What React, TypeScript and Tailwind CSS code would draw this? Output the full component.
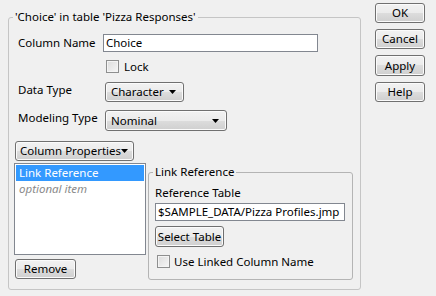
import React from 'react';

const font = { fontFamily: '"Noto Sans", "Open Sans", Arial, sans-serif' };

const btn =
  'flex items-center whitespace-nowrap rounded-[3px] border border-[#707070] bg-[linear-gradient(#f2f2f2_0%,#ebebeb_50%,#dddddd_50%,#cfcfcf_100%)] shadow-[inset_0_0_0_1px_#fbfbfb] leading-none text-black';

const Arrow = () => (
  <svg width="7" height="4" viewBox="0 0 7 4" className="shrink-0">
    <polygon points="0,0 7,0 3.5,4" fill="#000" />
  </svg>
);

const Check = () => (
  <span className="inline-block shrink-0 w-[13px] h-[13px] border border-[#8e8f8f] bg-[linear-gradient(135deg,#dcdcdc,#f6f6f6)] shadow-[inset_0_0_0_1px_#f4f4f4]" />
);

const Dropdown = ({ label, w, h }: { label: string; w: string; h: string }) => (
  <div className={`${btn} ${w} ${h} justify-between pl-[5px] pr-[7px]`}>
    <span>{label}</span>
    <Arrow />
  </div>
);

export default function App() {
  return (
    <div className="w-[436px] h-[296px] bg-[#f0f0f0] flex text-[11.5px] text-black overflow-hidden whitespace-nowrap" style={font}>
      {/* main group box */}
      <fieldset className="ml-[8px] mt-[9px] w-[353px] h-[281px] border border-[#c5c5c5] rounded-[3px] shrink-0">
        <legend className="ml-[4px] px-[2px] h-[16px] leading-[16px]">'Choice' in table 'Pizza Responses'</legend>

        <div className="flex items-center mt-[9px] h-[18px]">
          <span className="w-[94px] pl-[9px]">Column Name</span>
          <div className="w-[215px] h-[18px] border border-[#828790] bg-white pl-[2px] leading-[16px]">Choice</div>
        </div>

        <div className="flex items-center mt-[8px] h-[13px] pl-[97px]">
          <Check />
          <span className="ml-[5px] leading-[13px]">Lock</span>
        </div>

        <div className="flex items-start mt-[9px]">
          <span className="w-[96px] pl-[9px] leading-[16px]">Data Type</span>
          <Dropdown label="Character" w="w-[79px]" h="h-[20px]" />
        </div>

        <div className="flex items-start mt-[8px]">
          <span className="w-[96px] pl-[9px] leading-[16px]">Modeling Type</span>
          <Dropdown label="Nominal" w="w-[122px]" h="h-[21px]" />
        </div>

        <div className="mt-[10px] pl-[6px]">
          <div className={`${btn} w-[119px] h-[20px] justify-between pl-[4px] pr-[6px]`}>
            <span>Column Properties</span>
            <Arrow />
          </div>
        </div>

        <div className="flex mt-[2px] pl-[5px]">
          <div className="flex flex-col">
            <div className="w-[132px] h-[92px] border border-[#828790] bg-white p-px">
              <div className="h-[16px] leading-[16px] bg-[#3399ff] text-white pl-[3px]">Link Reference</div>
              <div className="h-[16px] leading-[16px] text-[#8a8a8a] italic pl-[3px]">optional item</div>
            </div>
            <div className={`${btn} justify-center mt-[4px] ml-[1px] w-[61px] h-[20px]`}>Remove</div>
          </div>

          <fieldset className="ml-[2px] mt-[1px] w-[205px] h-[116px] border border-[#b4b4b4] rounded-[3px]">
            <legend className="ml-[4px] px-[2px] h-[16px] leading-[16px]">Link Reference</legend>
            <div className="pl-[6px] flex flex-col items-start">
              <span className="mt-[5px] leading-[16px]">Reference Table</span>
              <div className="mt-[2px] w-[190px] h-[18px] border border-[#828790] bg-white pl-[2px] leading-[16px] overflow-hidden">
                $SAMPLE_DATA/Pizza Profiles.jmp
              </div>
              <div className={`${btn} justify-center mt-[5px] w-[69px] h-[21px]`}>Select Table</div>
              <div className="flex items-center mt-[8px] ml-[2px] h-[13px]">
                <Check />
                <span className="ml-[4px] leading-[13px]">Use Linked Column Name</span>
              </div>
            </div>
          </fieldset>
        </div>
      </fieldset>

      {/* dialog buttons */}
      <div className="flex flex-col ml-[14px] mt-[3px] w-[50px]">
        <div className={`${btn} justify-center h-[20px]`}>OK</div>
        <div className={`${btn} justify-center h-[20px] mt-[6px]`}>Cancel</div>
        <div className={`${btn} justify-center h-[21px] mt-[6px]`}>Apply</div>
        <div className={`${btn} justify-center h-[20px] mt-[6px]`}>Help</div>
      </div>
    </div>
  );
}
